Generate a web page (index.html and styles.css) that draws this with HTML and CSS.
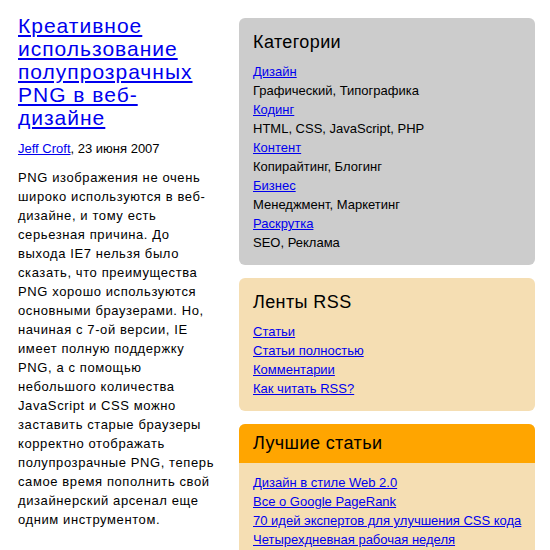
FILE: index.html
```html
<!DOCTYPE html>
<html lang="ru">
<head>
<meta charset="utf-8">
<title>Креативное использование полупрозрачных PNG в веб-дизайне</title>
<link rel="stylesheet" href="styles.css">
</head>
<body>
<div class="page">
  <main class="article">
    <h1 class="title"><a href="#">Креативное использование полупрозрачных PNG в веб-дизайне</a></h1>
    <p class="meta"><a href="#">Jeff Croft</a>, 23 июня 2007</p>
    <p class="text">PNG изображения не очень широко используются в веб-дизайне, и тому есть серьезная причина. До выхода IE7 нельзя было сказать, что преимущества PNG хорошо используются основными браузерами. Но, начиная с 7-ой версии, IE имеет полную поддержку PNG, а с помощью небольшого количества JavaScript и CSS можно заставить старые браузеры корректно отображать полупрозрачные PNG, теперь самое время пополнить свой дизайнерский арсенал еще одним инструментом.</p>
  </main>
  <aside class="sidebar">
    <section class="box box-gray">
      <h2 class="box-title">Категории</h2>
      <dl class="list">
        <dt><a href="#">Дизайн</a></dt>
        <dd>Графический, Типографика</dd>
        <dt><a href="#">Кодинг</a></dt>
        <dd>HTML, CSS, JavaScript, PHP</dd>
        <dt><a href="#">Контент</a></dt>
        <dd>Копирайтинг, Блогинг</dd>
        <dt><a href="#">Бизнес</a></dt>
        <dd>Менеджмент, Маркетинг</dd>
        <dt><a href="#">Раскрутка</a></dt>
        <dd>SEO, Реклама</dd>
      </dl>
    </section>
    <section class="box box-wheat">
      <h2 class="box-title">Ленты RSS</h2>
      <ul class="list">
        <li><a href="#">Статьи</a></li>
        <li><a href="#">Статьи полностью</a></li>
        <li><a href="#">Комментарии</a></li>
        <li><a href="#">Как читать RSS?</a></li>
      </ul>
    </section>
    <section class="box box-best">
      <h2 class="box-head">Лучшие статьи</h2>
      <ul class="list box-body">
        <li><a href="#">Дизайн в стиле Web 2.0</a></li>
        <li><a href="#">Все о Google PageRank</a></li>
        <li><a href="#">70 идей экспертов для улучшения CSS кода</a></li>
        <li><a href="#">Четырехдневная рабочая неделя</a></li>
      </ul>
    </section>
  </aside>
</div>
</body>
</html>
```
FILE: styles.css
```css
html, body {
  margin: 0;
  padding: 0;
  background: #fff;
}
body {
  font-family: "Liberation Sans", Arial, sans-serif;
  font-size: 13px;
  line-height: 19px;
  color: #000;
}
a {
  color: #0000ee;
  text-decoration: underline;
}
.page {
  display: flex;
  align-items: flex-start;
  gap: 19px;
  padding: 14px 15px 0 18px;
}
.article {
  width: 202px;
  flex: none;
  letter-spacing: 0.6px;
}
.title {
  margin: 0;
  font-size: 21px;
  line-height: 23px;
  font-weight: normal;
  letter-spacing: 1px;
}
.meta {
  margin: 10px 0 0;
  letter-spacing: 0;
}
.text {
  margin: 10px 0 0;
}
.sidebar {
  width: 296px;
  flex: none;
  display: flex;
  flex-direction: column;
  gap: 13px;
  margin-top: 4px;
}
.box {
  border-radius: 6px;
  padding: 14px 6px 13px 14px;
}
.box-gray { background: #cccccc; }
.box-wheat { background: #f5deb3; }
.box-best {
  background: #f5deb3;
  padding: 0;
  overflow: hidden;
}
.box-title, .box-head {
  margin: 0 0 9px;
  font-size: 18px;
  line-height: 21px;
  font-weight: normal;
  letter-spacing: 0.4px;
}
.box-head {
  margin: 0;
  background: #ffa500;
  padding: 9px 14px;
}
.list {
  margin: 0;
  padding: 0;
  list-style: none;
}
.list dt, .list dd {
  margin: 0;
}
.box-body {
  padding: 10px 4px 14px 14px;
}
```
